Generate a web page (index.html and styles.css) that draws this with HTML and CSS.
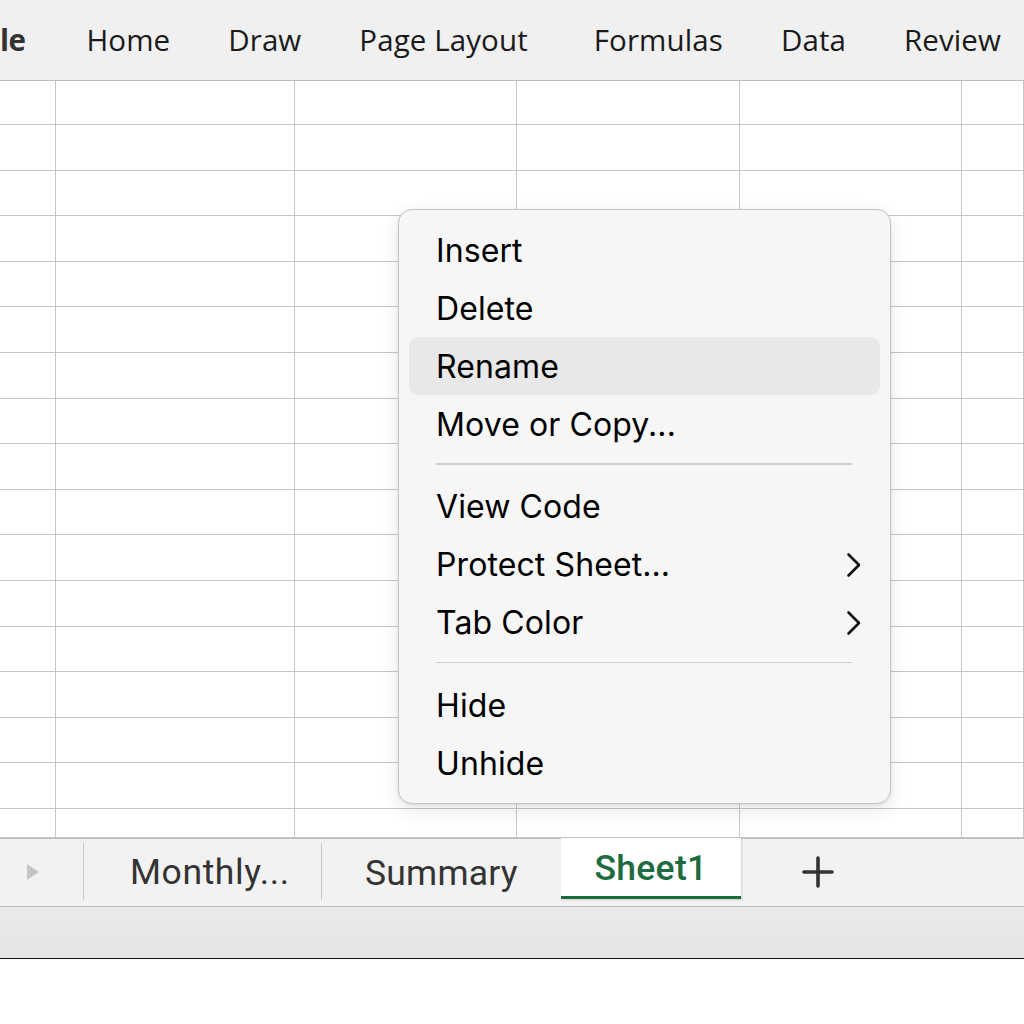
FILE: index.html
```html
<!DOCTYPE html>
<html>
<head>
<meta charset="utf-8">
<link rel="stylesheet" href="styles.css">
</head>
<body>
<div class="app">
  <nav class="ribbon">
    <span class="rtab rtab-file">le</span>
    <span class="rtab">Home</span>
    <span class="rtab">Draw</span>
    <span class="rtab rtab-pl">Page Layout</span>
    <span class="rtab">Formulas</span>
    <span class="rtab">Data</span>
    <span class="rtab">Review</span>
  </nav>

  <main class="sheet">
    <div class="grid">
      <div class="c"></div><div class="c"></div><div class="c"></div><div class="c"></div><div class="c"></div><div class="c"></div>
      <div class="c"></div><div class="c"></div><div class="c"></div><div class="c"></div><div class="c"></div><div class="c"></div>
      <div class="c"></div><div class="c"></div><div class="c"></div><div class="c"></div><div class="c"></div><div class="c"></div>
      <div class="c"></div><div class="c"></div><div class="c"></div><div class="c"></div><div class="c"></div><div class="c"></div>
      <div class="c"></div><div class="c"></div><div class="c"></div><div class="c"></div><div class="c"></div><div class="c"></div>
      <div class="c"></div><div class="c"></div><div class="c"></div><div class="c"></div><div class="c"></div><div class="c"></div>
      <div class="c"></div><div class="c"></div><div class="c"></div><div class="c"></div><div class="c"></div><div class="c"></div>
      <div class="c"></div><div class="c"></div><div class="c"></div><div class="c"></div><div class="c"></div><div class="c"></div>
      <div class="c"></div><div class="c"></div><div class="c"></div><div class="c"></div><div class="c"></div><div class="c"></div>
      <div class="c"></div><div class="c"></div><div class="c"></div><div class="c"></div><div class="c"></div><div class="c"></div>
      <div class="c"></div><div class="c"></div><div class="c"></div><div class="c"></div><div class="c"></div><div class="c"></div>
      <div class="c"></div><div class="c"></div><div class="c"></div><div class="c"></div><div class="c"></div><div class="c"></div>
      <div class="c"></div><div class="c"></div><div class="c"></div><div class="c"></div><div class="c"></div><div class="c"></div>
      <div class="c"></div><div class="c"></div><div class="c"></div><div class="c"></div><div class="c"></div><div class="c"></div>
      <div class="c"></div><div class="c"></div><div class="c"></div><div class="c"></div><div class="c"></div><div class="c"></div>
      <div class="c"></div><div class="c"></div><div class="c"></div><div class="c"></div><div class="c"></div><div class="c"></div>
      <div class="c"></div><div class="c"></div><div class="c"></div><div class="c"></div><div class="c"></div><div class="c"></div>
    </div>

    <div class="menu" role="menu">
      <div class="mi">Insert</div>
      <div class="mi">Delete</div>
      <div class="mi mi-hover">Rename</div>
      <div class="mi">Move or Copy...</div>
      <div class="sep"></div>
      <div class="mi">View Code</div>
      <div class="mi">Protect Sheet...
        <svg class="chev" viewBox="0 0 16 26" width="16" height="26"><path d="M2.5 2.5 L13 13 L2.5 23.5" fill="none" stroke="#111" stroke-width="2.6" stroke-linecap="round" stroke-linejoin="round"/></svg>
      </div>
      <div class="mi">Tab Color
        <svg class="chev" viewBox="0 0 16 26" width="16" height="26"><path d="M2.5 2.5 L13 13 L2.5 23.5" fill="none" stroke="#111" stroke-width="2.6" stroke-linecap="round" stroke-linejoin="round"/></svg>
      </div>
      <div class="sep"></div>
      <div class="mi">Hide</div>
      <div class="mi">Unhide</div>
    </div>
  </main>

  <footer class="tabbar">
    <div class="tb-nav">
      <svg viewBox="0 0 14 18" width="14" height="18"><path d="M1 1 L13 9 L1 17 Z" fill="#c4c4c4"/></svg>
    </div>
    <div class="stab stab-monthly">Monthly...</div>
    <div class="stab stab-summary">Summary</div>
    <div class="stab stab-active">Sheet1</div>
    <div class="tb-add">
      <svg viewBox="0 0 32 32" width="32" height="32"><path d="M16 2 V30 M2 16 H30" stroke="#333" stroke-width="3.6" stroke-linecap="round"/></svg>
    </div>
  </footer>
  <div class="statusbar"></div>
  <div class="below"></div>
</div>
</body>
</html>
```

FILE: styles.css
```css
* { box-sizing: border-box; }
html, body { margin: 0; padding: 0; }
body {
  width: 1024px;
  height: 1024px;
  overflow: hidden;
  background: #ffffff;
  font-family: "Open Sans", "Noto Sans", sans-serif;
}
.app {
  display: flex;
  flex-direction: column;
  width: 1024px;
  height: 1024px;
}

/* ribbon */
.ribbon {
  height: 81px;
  flex: none;
  background: #f0f0f0;
  border-bottom: 1px solid #bdbdbd;
  display: flex;
  align-items: center;
  gap: 58px;
  overflow: hidden;
  white-space: nowrap;
  padding-bottom: 2px;
}
.rtab {
  font-size: 29.5px;
  color: #1a1a1a;
  letter-spacing: 0.1px;
}
.rtab-file {
  font-weight: 700;
  color: #333;
  letter-spacing: -0.5px;
  margin-right: 3px;
}
.rtab-pl { margin-right: 8px; }

/* sheet */
.sheet {
  position: relative;
  height: 757px;
  flex: none;
  overflow: visible;
  background: #fff;
}
.grid {
  display: grid;
  grid-template-columns: 56px 239px 222px 223px 222px 62px;
  grid-template-rows: 44px repeat(15, 45.6px) 29px;
  height: 757px;
  overflow: hidden;
}
.c {
  border-right: 1.5px solid #c6c6c6;
  border-bottom: 1.5px solid #c6c6c6;
}

/* context menu */
.menu {
  position: absolute;
  left: 398px;
  top: 128px;
  width: 493px;
  height: 595px;
  background: #f6f6f6;
  border: 1px solid #c4c4c4;
  border-radius: 14px;
  box-shadow: 0 6px 18px rgba(0,0,0,0.10), 0 1px 3px rgba(0,0,0,0.08);
  padding: 11px 10px 10px 10px;
  font-family: "Inter", "Noto Sans", sans-serif;
  z-index: 5;
}
.mi {
  height: 58px;
  display: flex;
  align-items: center;
  justify-content: space-between;
  padding: 0 18px 0 27px;
  font-size: 32px;
  color: #000;
  border-radius: 9px;
  letter-spacing: 0.1px;
}
.mi-hover { background: #e8e8e8; }
.chev { flex: none; }
.sep {
  height: 1.5px;
  background: #cfcfcf;
  margin: 10px 28px 13px 27px;
}

/* sheet tabs */
.tabbar {
  height: 69px;
  flex: none;
  background: #f2f2f2;
  border-top: 1.5px solid #bdbdbd;
  border-bottom: 1.5px solid #bdbdbd;
  display: flex;
  align-items: stretch;
  font-family: "Roboto", "Noto Sans", sans-serif;
  position: relative;
}
.tb-nav {
  width: 84px;
  display: flex;
  align-items: center;
  padding-left: 26px;
  border-right: 1.5px solid #c8c8c8;
  margin: 4px 0 6px 0;
}
.stab {
  display: flex;
  align-items: center;
  font-size: 35.5px;
  color: #333;
  letter-spacing: 0.6px;
}
.stab-monthly {
  width: 238px;
  padding-left: 46px;
  border-right: 1.5px solid #c8c8c8;
  margin: 4px 0 6px 0;
}
.stab-summary {
  width: 239px;
  padding-left: 43px;
  letter-spacing: 0.2px;
}
.stab-active {
  width: 180px;
  justify-content: center;
  background: #ffffff;
  color: #1e6b3f;
  font-weight: 500;
  letter-spacing: 0.3px;
  margin-top: -1.5px;
  margin-bottom: 7px;
  border-bottom: 3px solid #1e6b3f;
  box-shadow: 1px 1px 2px rgba(0,0,0,0.15);
  padding-top: 3px;
}
.tb-add {
  width: 154px;
  display: flex;
  align-items: center;
  justify-content: center;
  padding-bottom: 2px;
}

.statusbar {
  height: 52px;
  flex: none;
  background: linear-gradient(#ebebeb, #e4e4e4);
  border-bottom: 1.5px solid #111;
}
.below {
  flex: 1;
  background: #fff;
}
```
